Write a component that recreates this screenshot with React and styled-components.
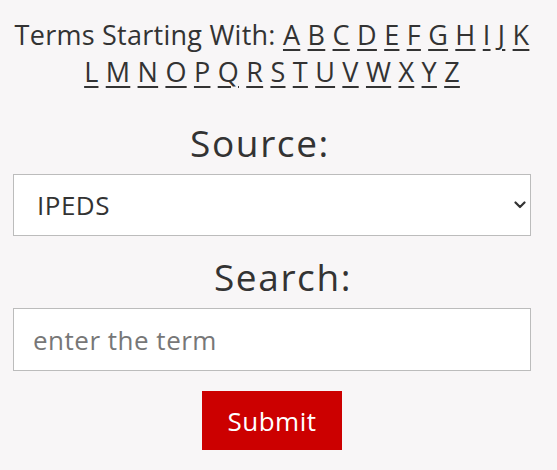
import React from "react";
import styled, { createGlobalStyle } from "styled-components";

const GlobalStyle = createGlobalStyle`
  body {
    margin: 0;
    background: #f8f6f7;
    font-family: "Open Sans", "Liberation Sans", sans-serif;
    color: #333;
  }
`;

const Page = styled.div`
  padding: 16px 26px 20px 13px;
  display: flex;
  flex-direction: column;
  align-items: stretch;
`;

const Letters = styled.p`
  margin: 0;
  font-size: 27px;
  line-height: 37px;
  letter-spacing: 0.25px;
  text-align: center;
`;

const LetterLink = styled.a`
  color: #333;
  text-decoration: underline;
  text-underline-offset: 4px;
  text-decoration-thickness: 2px;
`;

const Label = styled.label`
  display: block;
  font-size: 37px;
  line-height: 46px;
  letter-spacing: 1.6px;
  text-align: center;
  margin-top: ${p => p.top}px;
  margin-bottom: 8px;
  padding-left: ${p => p.shiftLeft || 0}px;
  padding-right: ${p => p.shiftRight || 0}px;
`;

const SelectWrap = styled.div`
  position: relative;
`;

const Select = styled.select`
  appearance: none;
  width: 100%;
  height: 62px;
  box-sizing: border-box;
  border: 1px solid #bcbcbc;
  border-radius: 0;
  background: #fff;
  padding: 0 30px 0 23px;
  font-family: "Open Sans", "Liberation Sans", sans-serif;
  font-size: 26px;
  letter-spacing: 0.5px;
  color: #333;
`;

const Chevron = styled.svg`
  position: absolute;
  right: 5px;
  top: 27px;
  width: 12px;
  height: 8px;
  pointer-events: none;
`;

const Input = styled.input`
  width: 100%;
  height: 63px;
  box-sizing: border-box;
  border: 1px solid #bcbcbc;
  border-radius: 0;
  background: #fff;
  padding: 0 19px;
  font-family: "Open Sans", "Liberation Sans", sans-serif;
  font-size: 26px;
  letter-spacing: 0.5px;
  color: #333;

  &::placeholder {
    color: #777;
  }
`;

const Submit = styled.button`
  align-self: center;
  margin-top: 20px;
  width: 140px;
  height: 59px;
  border: none;
  border-radius: 0;
  background: #cc0000;
  color: #fff;
  font-family: "Open Sans", "Liberation Sans", sans-serif;
  font-size: 26px;
  letter-spacing: 0.5px;
`;

const LETTERS = "ABCDEFGHIJKLMNOPQRSTUVWXYZ".split("");

export default function App() {
  return (
    <>
      <GlobalStyle />
      <Page>
        <Letters>
          Terms Starting With:{" "}
          {LETTERS.map((l, i) => (
            <React.Fragment key={l}>
              <LetterLink href={`#${l}`}>{l}</LetterLink>
              {i < LETTERS.length - 1 ? " " : ""}
            </React.Fragment>
          ))}
        </Letters>
        <Label htmlFor="source" top={30} shiftRight={24}>
          Source:
        </Label>
        <SelectWrap>
          <Select id="source" defaultValue="IPEDS">
            <option>IPEDS</option>
          </Select>
          <Chevron viewBox="0 0 12 8">
            <path
              d="M1.5 1.5 L6 6 L10.5 1.5"
              fill="none"
              stroke="#333"
              strokeWidth="2.2"
              strokeLinecap="round"
              strokeLinejoin="round"
            />
          </Chevron>
        </SelectWrap>
        <Label htmlFor="search" top={18} shiftLeft={22}>
          Search:
        </Label>
        <Input id="search" placeholder="enter the term" />
        <Submit type="button">Submit</Submit>
      </Page>
    </>
  );
}
